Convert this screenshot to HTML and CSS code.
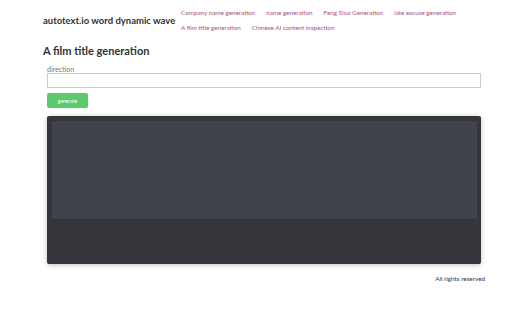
FILE: index.html
```html
<!DOCTYPE html>
<html lang="en">

<head>
    <meta charset="UTF-8">
    <meta name="viewport" content="width=device-width, initial-scale=1.0">
    <title>A film title generation</title>
    <link rel="stylesheet" href="styles.css">
</head>

<body>

    <div class="page">
        <header class="top-bar">
            <div class="brand">autotext.io word dynamic wave</div>
            <nav class="nav-links">
                <a href="#">Company name generation</a>
                <a href="#">name generation</a>
                <a href="#">Feng Shui Generation</a>
                <a href="#">late excuse generation</a>
                <a href="#">A film title generation</a>
                <a href="#">Chinese AI content inspection</a>
            </nav>
        </header>

        <h2 class="page-title">A film title generation</h2>

        <div class="form-area">
            <label for="direction">direction</label>
            <input type="text" id="direction">
            <button class="generate-button">generate</button>

            <div class="output-box">
                <div class="output-inner"></div>
            </div>
        </div>

        <footer class="footer">All rights reserved</footer>
    </div>

</body>

</html>
```

FILE: styles.css
```css
body {
    margin: 0;
    background-color: #fff;
    font-family: Lato, "Open Sans", sans-serif;
    color: #333;
}

.page {
    width: 442px;
    margin-left: 43px;
}

.top-bar {
    display: flex;
    align-items: center;
    padding-top: 5px;
}

.brand {
    font-size: 9.5px;
    font-weight: bold;
    color: #333;
    white-space: nowrap;
    width: 138px;
    flex-shrink: 0;
}

.nav-links {
    display: flex;
    flex-wrap: wrap;
    column-gap: 11px;
    row-gap: 0;
    width: 310px;
}

.nav-links a {
    font-size: 6.3px;
    line-height: 15px;
    color: #a8557d;
    text-decoration: none;
}

.page-title {
    font-size: 11px;
    margin: 9px 0 9px;
    color: #333;
}

.form-area {
    padding: 0 4px;
}

.form-area label {
    display: block;
    font-size: 7px;
    color: #777;
    line-height: 7px;
}

.form-area input {
    display: block;
    box-sizing: border-box;
    width: 100%;
    height: 15px;
    border: 1px solid #ccc;
    margin: 0;
}

.generate-button {
    display: block;
    margin-top: 5px;
    width: 41px;
    height: 15px;
    padding: 0;
    border: none;
    border-radius: 2px;
    background-color: #5cc96b;
    color: #fff;
    font-family: inherit;
    font-size: 5px;
}

.output-box {
    margin-top: 8px;
    height: 148px;
    padding: 5px 4px 0 5px;
    box-sizing: border-box;
    background-color: #34363b;
    border-radius: 2px;
    box-shadow: 0 1px 5px rgba(0, 0, 0, 0.25);
}

.output-inner {
    height: 98px;
    background-color: #41434a;
}

.footer {
    text-align: right;
    font-size: 6.3px;
    margin-top: 11px;
    color: #333;
}
```
